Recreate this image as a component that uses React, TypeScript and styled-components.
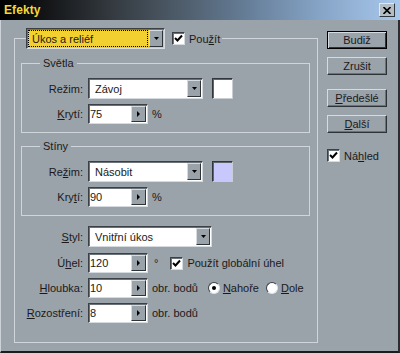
import React from 'react';
import styled, { createGlobalStyle } from 'styled-components';

const GlobalStyle = createGlobalStyle`
  html, body {
    margin: 0;
    padding: 0;
    background: #9aa2aa;
  }
  body {
    font-family: "Liberation Sans", Arial, sans-serif;
    font-size: 11px;
    color: #1a1a1a;
  }
`;

const Window = styled.div`
  width: 400px;
  height: 353px;
  display: flex;
  flex-direction: column;
  background: #9aa2aa;
  overflow: hidden;
`;

const TitleBar = styled.div`
  height: 20px;
  flex: none;
  display: flex;
  align-items: center;
  justify-content: space-between;
  padding: 0 5px 0 4px;
  background: linear-gradient(
    to right,
    #000 0%,
    #141618 12%,
    #343a40 28%,
    #4e5c6a 45%,
    #667e98 62%,
    #86a4c6 80%,
    #a8c8ec 100%
  );
`;

const Title = styled.span`
  font-weight: bold;
  font-size: 12px;
  color: #f4d838;
  letter-spacing: 0.1px;
`;

const CloseButton = styled.div`
  width: 14px;
  height: 12px;
  display: flex;
  align-items: center;
  justify-content: center;
  background: #b4bcc4;
  border: 1px solid;
  border-color: #e4e8ec #30363c #30363c #e4e8ec;
`;

const Body = styled.div`
  flex: 1;
  display: flex;
  align-items: flex-start;
  padding: 8px 0 0 13px;
  border-left: 1px solid #cdd3d9;
  border-right: 2px solid #2a2e32;
  border-bottom: 2px solid #1a1c1e;
`;

const Group = styled.fieldset<{ $mt?: number }>`
  margin: ${p => p.$mt ?? 0}px 0 0 0;
  padding: 8px 0 8px 0;
  min-width: 0;
  border: 1px solid #cfd5db;
`;

const MainGroup = styled(Group)`
  width: 304px;
  box-sizing: border-box;
  padding: 0 7px 19px 6px;
`;

const MainLegend = styled.legend`
  margin-left: 5px;
  padding: 0 2px 0 0;
`;

const LegendRow = styled.div`
  display: flex;
  align-items: center;
`;

const SubLegend = styled.legend`
  margin-left: 18px;
  padding: 0 3px;
  line-height: 13px;
`;

const Row = styled.div<{ $mt?: number }>`
  display: flex;
  align-items: center;
  margin-top: ${p => p.$mt ?? 5}px;
  &:first-of-type {
    margin-top: ${p => p.$mt ?? 0}px;
  }
`;

const Label = styled.span<{ $w: number }>`
  width: ${p => p.$w}px;
  margin-right: 5px;
  text-align: right;
  white-space: nowrap;
`;

const Key = styled.u`
  text-decoration: underline;
  text-underline-offset: 1px;
`;

const Combo = styled.div<{ $w: number; $yellow?: boolean }>`
  width: ${p => p.$w}px;
  height: 21px;
  box-sizing: border-box;
  display: flex;
  align-items: stretch;
  background: ${p => (p.$yellow ? '#f2d030' : '#ffffff')};
  border: 1px solid;
  border-color: #3a4046 #d6dbe0 #d6dbe0 #3a4046;
  box-shadow: inset 1px 1px 0 #6a7278;
`;

const ComboText = styled.div<{ $focus?: boolean }>`
  flex: 1;
  display: flex;
  align-items: center;
  padding-left: ${p => (p.$focus ? 3 : 6)}px;
  margin: ${p => (p.$focus ? '2px 2px 2px 2px' : '0')};
  outline: ${p => (p.$focus ? '1px dotted #000' : 'none')};
  white-space: nowrap;
`;

const DropButton = styled.div`
  width: 12px;
  margin: 1px 1px 1px 0;
  display: flex;
  align-items: center;
  justify-content: center;
  background: #9aa2aa;
  border: 1px solid;
  border-color: #d6dbe0 #2e3338 #2e3338 #d6dbe0;
`;

const Spin = styled.div`
  width: 60px;
  height: 20px;
  box-sizing: border-box;
  display: flex;
  align-items: stretch;
  background: #fff;
  border: 1px solid;
  border-color: #3a4046 #d6dbe0 #d6dbe0 #3a4046;
  box-shadow: inset 1px 1px 0 #6a7278;
`;

const SpinText = styled.div`
  flex: 1;
  display: flex;
  align-items: center;
  padding-left: 1px;
`;

const SpinButton = styled(DropButton)`
  width: 13px;
`;

const Unit = styled.span<{ $ml?: number }>`
  margin-left: ${p => p.$ml ?? 4}px;
  white-space: nowrap;
`;

const Swatch = styled.div<{ $color: string }>`
  width: 21px;
  height: 21px;
  box-sizing: border-box;
  margin-left: 9px;
  background: ${p => p.$color};
  border: 1px solid;
  border-color: #30363c #c8ced4 #c8ced4 #30363c;
  box-shadow: inset 1px 1px 0 #5e666c;
`;

const CheckBox = styled.div<{ $ml?: number }>`
  width: 13px;
  height: 13px;
  box-sizing: border-box;
  flex: none;
  margin-left: ${p => p.$ml ?? 0}px;
  margin-right: 4px;
  display: flex;
  align-items: center;
  justify-content: center;
  background: #fff;
  border: 1px solid;
  border-color: #3a4046 #d6dbe0 #d6dbe0 #3a4046;
  box-shadow: inset 1px 1px 0 #6a7278;
`;

const Radio = styled.div<{ $on?: boolean; $ml?: number }>`
  width: 12px;
  height: 12px;
  box-sizing: border-box;
  flex: none;
  margin-left: ${p => p.$ml ?? 0}px;
  margin-right: 3px;
  border-radius: 50%;
  background: #fff;
  border: 1px solid;
  border-color: #3a4046 #e0e4e8 #e0e4e8 #3a4046;
  display: flex;
  align-items: center;
  justify-content: center;
  &::after {
    content: '';
    width: 4px;
    height: 4px;
    border-radius: 50%;
    background: ${p => (p.$on ? '#000' : 'transparent')};
  }
`;

const Side = styled.div`
  margin: 3px 0 0 9px;
  display: flex;
  flex-direction: column;
  align-items: flex-start;
`;

const Button = styled.div<{ $default?: boolean; $mt?: number }>`
  width: 60px;
  height: 18px;
  box-sizing: border-box;
  margin-top: ${p => p.$mt ?? 0}px;
  display: flex;
  align-items: center;
  justify-content: center;
  background: #9aa2aa;
  border: 1px solid;
  border-color: ${p => (p.$default ? '#000' : '#d6dbe0 #2e3338 #2e3338 #d6dbe0')};
  box-shadow: ${p =>
    p.$default
      ? 'inset 1px 1px 0 #d6dbe0, inset -1px -1px 0 #2e3338'
      : 'inset -1px -1px 0 #6a7278'};
`;

const CheckRow = styled.div<{ $mt?: number }>`
  display: flex;
  align-items: center;
  margin-top: ${p => p.$mt ?? 0}px;
`;

const Tick = () => (
  <svg width="9" height="9" viewBox="0 0 9 9">
    <path d="M1 4 L3.5 6.5 L8 1.5" fill="none" stroke="#000" strokeWidth="2" />
  </svg>
);

const DownArrow = () => (
  <svg width="5" height="3" viewBox="0 0 5 3">
    <path d="M0 0 H5 L2.5 3 Z" fill="#000" />
  </svg>
);

const RightArrow = () => (
  <svg width="3" height="6" viewBox="0 0 3 6">
    <path d="M0 0 V6 L3 3 Z" fill="#000" />
  </svg>
);

const SpinField = ({ value }: { value: string }) => (
  <Spin>
    <SpinText>{value}</SpinText>
    <SpinButton>
      <RightArrow />
    </SpinButton>
  </Spin>
);

const Select = ({ value, width }: { value: string; width: number }) => (
  <Combo $w={width}>
    <ComboText>{value}</ComboText>
    <DropButton>
      <DownArrow />
    </DropButton>
  </Combo>
);

interface LightProps {
  title: string;
  mode: string;
  opacity: string;
  color: string;
  modeLabel: React.ReactNode;
  opacityLabel: React.ReactNode;
  mt: number;
}

const LightGroup = ({ title, mode, opacity, color, modeLabel, opacityLabel, mt }: LightProps) => (
  <Group $mt={mt}>
    <SubLegend>{title}</SubLegend>
    <Row>
      <Label $w={61}>{modeLabel}</Label>
      <Select value={mode} width={115} />
      <Swatch $color={color} />
    </Row>
    <Row>
      <Label $w={61}>{opacityLabel}</Label>
      <SpinField value={opacity} />
      <Unit>%</Unit>
    </Row>
  </Group>
);

const App = () => {
  return (
    <>
      <GlobalStyle />
      <Window>
        <TitleBar>
          <Title>Efekty</Title>
          <CloseButton>
            <svg width="8" height="7" viewBox="0 0 8 7">
              <path d="M0.5 0 L7.5 7 M7.5 0 L0.5 7" stroke="#000" strokeWidth="1.6" />
            </svg>
          </CloseButton>
        </TitleBar>
        <Body>
          <MainGroup>
            <MainLegend>
              <LegendRow>
                <Combo $w={139} $yellow>
                  <ComboText $focus>Úkos a reliéf</ComboText>
                  <DropButton>
                    <DownArrow />
                  </DropButton>
                </Combo>
                <CheckBox $ml={7}>
                  <Tick />
                </CheckBox>
                <span>
                  Pou<Key>ž</Key>ít
                </span>
              </LegendRow>
            </MainLegend>

            <LightGroup
              mt={8}
              title="Světla"
              mode="Závoj"
              opacity="75"
              color="#ffffff"
              modeLabel="Režim:"
              opacityLabel={
                <>
                  <Key>K</Key>rytí:
                </>
              }
            />
            <LightGroup
              mt={7}
              title="Stíny"
              mode="Násobit"
              opacity="90"
              color="#c8c8fc"
              modeLabel={
                <>
                  Re<Key>ž</Key>im:
                </>
              }
              opacityLabel={
                <>
                  Kry<Key>t</Key>í:
                </>
              }
            />

            <Row $mt={10}>
              <Label $w={62}>
                <Key>S</Key>tyl:
              </Label>
              <Select value="Vnitřní úkos" width={124} />
            </Row>
            <Row $mt={6}>
              <Label $w={62}>
                Ú<Key>h</Key>el:
              </Label>
              <SpinField value="120" />
              <Unit $ml={6}>°</Unit>
              <CheckBox $ml={12}>
                <Tick />
              </CheckBox>
              <span>
                Použít <Key>g</Key>lobální úhel
              </span>
            </Row>
            <Row>
              <Label $w={62}>
                <Key>H</Key>loubka:
              </Label>
              <SpinField value="10" />
              <Unit>obr. bodů</Unit>
              <Radio $on $ml={10} />
              <span>
                <Key>N</Key>ahoře
              </span>
              <Radio $ml={7} />
              <span>
                <Key>D</Key>ole
              </span>
            </Row>
            <Row>
              <Label $w={62}>
                <Key>R</Key>ozostření:
              </Label>
              <SpinField value="8" />
              <Unit>obr. bodů</Unit>
            </Row>
          </MainGroup>

          <Side>
            <Button $default>Budiž</Button>
            <Button $mt={8}>Zrušit</Button>
            <Button $mt={14}>
              <span>
                <Key>P</Key>ředešlé
              </span>
            </Button>
            <Button $mt={8}>
              <span>
                <Key>D</Key>alší
              </span>
            </Button>
            <CheckRow $mt={16}>
              <CheckBox>
                <Tick />
              </CheckBox>
              <span>
                Ná<Key>h</Key>led
              </span>
            </CheckRow>
          </Side>
        </Body>
      </Window>
    </>
  );
};

export default App;
